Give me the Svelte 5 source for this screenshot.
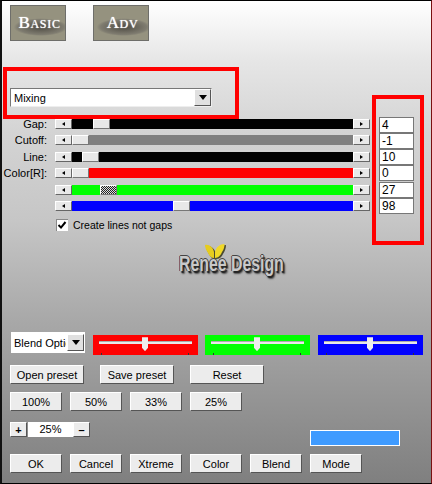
<script>
  const sliders = [
    { label: 'Gap:', value: '4', pos: 21, color: '#000000' },
    { label: 'Cutoff:', value: '-1', pos: 0, color: '#808080' },
    { label: 'Line:', value: '10', pos: 10, color: '#000000' },
    { label: 'Color[R]:', value: '0', pos: 0, color: '#ff0000' },
    { label: '', value: '27', pos: 28, color: '#00ff00', busy: true },
    { label: '', value: '98', pos: 101, color: '#0000ff' }
  ];
  const blends = ['#ff0000', '#00ff00', '#0000ff'];
  const presets = ['Open preset', 'Save preset', 'Reset'];
  const zooms = ['100%', '50%', '33%', '25%'];
  const actions = ['OK', 'Cancel', 'Xtreme', 'Color', 'Blend', 'Mode'];
</script>

<div class="window">
  <div class="tabs">
    <button class="tab">Basic</button>
    <button class="tab">Adv</button>
  </div>

  <div class="select">
    <span class="select-text">Mixing</span>
    <span class="drop"><i></i></span>
  </div>

  <div class="params">
    <div class="rows">
      {#each sliders as s}
        <div class="row">
          <span class="label">{s.label}</span>
          <span class="step left"><i></i></span>
          <div class="track" style="background: {s.color}">
            <span class="thumb" class:busy={s.busy} style="left: {s.pos}px"></span>
          </div>
          <span class="step right"><i></i></span>
        </div>
      {/each}
    </div>
    <div class="values">
      {#each sliders as s}
        <div class="value">{s.value}</div>
      {/each}
    </div>
  </div>

  <label class="check">
    <span class="box">
      <svg viewBox="0 0 12 12" width="12" height="12">
        <path d="M2.5 6 L5 8.6 L9.5 3" fill="none" stroke="#000" stroke-width="2" />
      </svg>
    </span>
    Create lines not gaps
  </label>

  <div class="logo">
    <span class="logo-text">Renee Design</span>
    <svg class="fly" viewBox="0 0 22 15" width="22" height="15">
      <path d="M11 14 C8 14 5 12 4 9 C2 6 1 3 1 1 C5 0 9 3 11 8 C12 3 16 0 21 0 C21 3 20 6 18 9 C17 12 14 14 11 14 Z" fill="#4a4a30" transform="translate(1 1)" />
      <path d="M10 14 C8 14 5 12 4 9 C2 6 1 3 1 1 C5 0 9 3 10 8 Z" fill="#e6cc1e" />
      <path d="M11 14 C14 14 17 11 18 8 C20 5 20.5 3 20.5 0 C16 0 12 3 11 8 Z" fill="#f0d828" />
    </svg>
  </div>

  <div class="blend-row">
    <div class="blend-select">
      <span class="blend-text">Blend Optic</span>
      <span class="drop"><i></i></span>
    </div>
    <div class="panels">
      {#each blends as c}
        <div class="panel" style="background: {c}">
          <span class="rail"></span>
          <span class="knob"></span>
        </div>
      {/each}
    </div>
  </div>

  <div class="btns presets">
    {#each presets as p}
      <button class="btn">{p}</button>
    {/each}
  </div>

  <div class="btns zooms">
    {#each zooms as z}
      <button class="btn">{z}</button>
    {/each}
  </div>

  <div class="zoom-row">
    <button class="btn mini">+</button>
    <div class="zoom-val">25%</div>
    <button class="btn mini">–</button>
    <div class="color-bar"></div>
  </div>

  <div class="btns actions">
    {#each actions as a}
      <button class="btn">{a}</button>
    {/each}
  </div>

  <div class="mark mark-select"></div>
  <div class="mark mark-values"></div>
</div>

<style>
  :global(body) {
    margin: 0;
  }

  .window {
    position: relative;
    box-sizing: border-box;
    width: 432px;
    height: 484px;
    padding: 4px 0 0 8px;
    overflow: hidden;
    border-style: solid;
    border-width: 1px 1px 1px 2px;
    border-color: #000 #7a1010 #000 #111;
    background: linear-gradient(#ffffff 0, #e6e6e6 60px, #d4d4d4 130px, #c6c6c6 220px, #a8a8a8 320px, #7f7f7f 483px);
    font-family: "Liberation Sans", Arial, sans-serif;
    font-size: 11px;
    color: #000;
  }

  button {
    font: inherit;
    color: inherit;
    padding: 0;
    cursor: default;
  }

  .tabs {
    display: flex;
    gap: 27px;
  }

  .tab {
    box-sizing: border-box;
    width: 56px;
    height: 36px;
    padding-left: 3px;
    border: 1px solid #6e6e6a;
    background: radial-gradient(ellipse 50% 26% at 55% 62%, #4d4a42, #7f7c70 85%, #95927f);
    font-family: "Liberation Serif", serif;
    font-size: 17px;
    font-variant: small-caps;
    letter-spacing: 0.7px;
    color: #fff;
    text-shadow: 0 0 1px #fff;
  }

  .select {
    box-sizing: border-box;
    display: flex;
    align-items: center;
    justify-content: space-between;
    width: 202px;
    height: 19px;
    margin-top: 47px;
    padding: 0 0 0 3px;
    border: 1px solid #777;
    border-bottom-color: #eee;
    border-right-color: #eee;
    background: #fff;
  }

  .drop {
    box-sizing: border-box;
    display: flex;
    align-items: center;
    justify-content: center;
    width: 17px;
    height: 17px;
    border: 1px solid;
    border-color: #fff #555 #555 #fff;
    background: #e0e0e0;
  }

  .drop i {
    border-top: 5px solid #000;
    border-left: 4px solid transparent;
    border-right: 4px solid transparent;
  }

  .params {
    display: flex;
    margin-top: 10px;
  }

  .rows {
    width: 369px;
    margin-left: -8px;
  }

  .row {
    display: flex;
    align-items: flex-start;
    height: 16.4px;
    padding-top: 2px;
    box-sizing: border-box;
  }

  .label {
    box-sizing: border-box;
    width: 45px;
    margin-top: -2px;
    margin-right: 8px;
    text-align: right;
    line-height: 14px;
    white-space: nowrap;
  }

  .step {
    box-sizing: border-box;
    display: flex;
    align-items: center;
    justify-content: center;
    width: 17px;
    height: 10px;
    border: 1px solid;
    border-color: #fff #666 #666 #fff;
    background: #e8e8e8;
  }

  .step i {
    border-top: 2px solid transparent;
    border-bottom: 2px solid transparent;
  }

  .step.left i {
    border-right: 3px solid #000;
  }

  .step.right i {
    border-left: 3px solid #000;
  }

  .track {
    position: relative;
    width: 281px;
    height: 10px;
  }

  .thumb {
    position: absolute;
    top: 0;
    box-sizing: border-box;
    width: 17px;
    height: 10px;
    border: 1px solid;
    border-color: #fff #777 #777 #fff;
    background: #e8e8e8;
  }

  .thumb.busy {
    background: repeating-conic-gradient(#222 0 25%, #ddd 0 50%) 0 0 / 2px 2px;
  }

  .values {
    margin-left: 8px;
  }

  .value {
    box-sizing: border-box;
    width: 35px;
    height: 16px;
    padding-left: 2px;
    border: 1px solid #777;
    background: #fff;
    line-height: 14px;
    font-size: 12px;
  }

  .value:nth-child(5) {
    margin-top: 1px;
  }

  .check {
    display: flex;
    align-items: center;
    gap: 5px;
    height: 12px;
    margin: 4px 0 0 46px;
    font-size: 10.5px;
  }

  .box {
    box-sizing: border-box;
    display: block;
    width: 12px;
    height: 12px;
    background: #fff;
    box-shadow: inset 1px 1px 0 #888;
  }

  .box svg {
    display: block;
  }

  .logo {
    position: relative;
    width: 110px;
    height: 32px;
    margin: 13px 0 0 169px;
  }

  .fly {
    position: absolute;
    left: 25px;
    top: 0;
  }

  .logo-text {
    position: absolute;
    left: 0;
    top: 8px;
    transform: scaleX(0.72);
    transform-origin: left;
    font-size: 22px;
    font-weight: bold;
    line-height: 24px;
    white-space: nowrap;
    color: #c9c9c9;
    text-shadow: -1px 0 0 #333, 1px 0 0 #333, 0 -1px 0 #444, 2px 2px 1px #222, 3px 3px 2px #555;
  }

  .blend-row {
    display: flex;
    align-items: flex-start;
    margin-top: 56px;
    margin-left: 1px;
  }

  .blend-select {
    box-sizing: border-box;
    display: flex;
    align-items: center;
    justify-content: space-between;
    width: 74px;
    height: 21px;
    padding: 0 1px 0 3px;
    background: #fff;
  }

  .blend-text {
    width: 52px;
    overflow: hidden;
    white-space: nowrap;
  }

  .panels {
    display: flex;
    gap: 7px;
    margin: 3px 0 0 8px;
  }

  .panel {
    position: relative;
    width: 105px;
    height: 20px;
  }

  .panel:last-child {
    margin-left: 1px;
  }

  .panel::before,
  .panel::after {
    content: '';
    position: absolute;
    bottom: 0;
    width: 1px;
    height: 2px;
    background: #333;
  }

  .panel::before {
    left: 8px;
  }

  .panel::after {
    right: 9px;
  }

  .rail {
    position: absolute;
    left: 6px;
    right: 6px;
    top: 7px;
    height: 2px;
    background: #e8e8e8;
    box-shadow: 0 -1px 0 #aaa;
  }

  .knob {
    position: absolute;
    left: 49px;
    top: 2px;
    width: 6px;
    height: 14px;
    background: #eee;
    clip-path: polygon(0 0, 100% 0, 100% 75%, 50% 100%, 0 75%);
  }

  .btns {
    display: flex;
  }

  .btn {
    box-sizing: border-box;
    width: 52px;
    height: 19px;
    border: 1px solid;
    border-color: #fff #555 #555 #fff;
    background: #ececec;
    line-height: 16px;
  }

  .presets {
    gap: 16px;
    margin-top: 10px;
  }

  .presets .btn {
    width: 74px;
  }

  .zooms,
  .actions {
    gap: 8px;
  }

  .zooms {
    margin-top: 8px;
  }

  .zoom-row {
    display: flex;
    align-items: flex-start;
    height: 24px;
    margin-top: 11px;
  }

  .mini {
    width: 17px;
    height: 15px;
    font-weight: bold;
    line-height: 12px;
  }

  .zoom-val {
    width: 45px;
    height: 15px;
    margin: 0 0 0 1px;
    background: #fff;
    text-align: center;
    line-height: 14px;
  }

  .color-bar {
    box-sizing: border-box;
    width: 90px;
    height: 16px;
    margin: 8px 0 0 220px;
    border: 1px solid #fff;
    background: #3f9bff;
  }

  .actions {
    margin-top: 8px;
  }

  /* red annotation frames drawn over the dialog */
  .mark {
    position: absolute;
    box-sizing: border-box;
    border: 4px solid #ff0000;
  }

  .mark-select {
    left: 1px;
    top: 66px;
    width: 236px;
    height: 52px;
  }

  .mark-values {
    left: 370px;
    top: 94px;
    width: 52px;
    height: 150px;
  }
</style>
